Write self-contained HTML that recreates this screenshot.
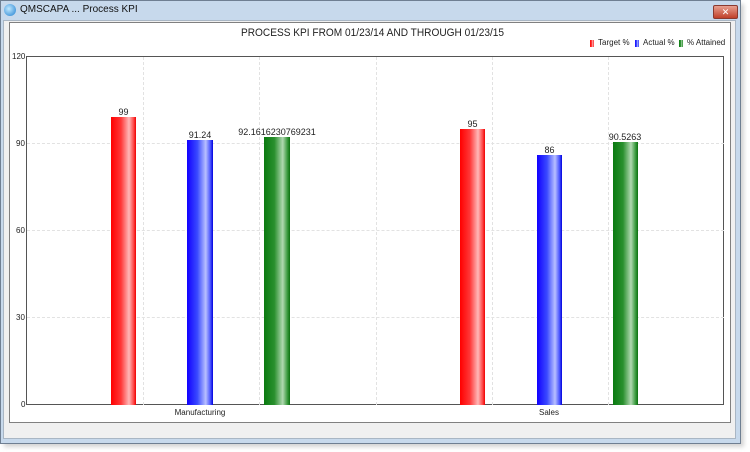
<!DOCTYPE html>
<html><head><style>
body{margin:0;width:750px;height:452px;background:#fff;position:relative;overflow:hidden;font-family:"Liberation Sans",sans-serif}
.a{position:absolute}
.t{position:absolute;font-size:9px;color:#222;white-space:nowrap}
.r{background:linear-gradient(90deg,#f00 0%,#ff3838 40%,#ffb8b8 72%,#ff4a4a 90%,#e00 100%)}
.b{background:linear-gradient(90deg,#10f 0%,#3a4aff 40%,#b8bfff 72%,#4a55ff 90%,#00d 100%)}
.g{background:linear-gradient(90deg,#0a7a10 0%,#2a902e 40%,#b0d8b0 72%,#3a9a3e 90%,#0a700e 100%)}
.vg{position:absolute;top:57px;height:348px;border-left:1px dashed #e2e2e2}
.hg{position:absolute;left:27px;width:697px;border-top:1px dashed #e2e2e2}
</style></head><body>
<div class="a" style="left:4px;top:4px;width:740px;height:443px;background:#aaa;opacity:.5;filter:blur(2px)"></div>
<div class="a" style="left:0;top:0;width:739px;height:442px;background:#c7d9ec;border:1px solid #6f7f92"></div>
<div class="a" style="left:3px;top:20px;width:733px;height:419px;background:#f0f0f0;border:1px solid #a9b6c4;box-sizing:border-box"></div>
<div class="a" style="left:4px;top:4px;width:12px;height:12px;border-radius:50%;background:radial-gradient(circle at 40% 40%,#bfe8ff,#1f7fd0)"></div>
<div class="t" style="left:20px;top:4px;font-size:10px;color:#111">QMSCAPA ... Process KPI</div>
<div class="a" style="left:713px;top:5px;width:23px;height:12px;border-radius:2px;background:linear-gradient(#e8a090,#c0402a);border:1px solid #8a3a30;color:#fff;font-size:9px;text-align:center;line-height:12px">✕</div>
<div class="a" style="left:9px;top:22px;width:722px;height:401px;background:#fff;border:1px solid #808080;box-sizing:border-box"></div>
<div class="t" style="left:241px;top:27px;font-size:11px;color:#222;transform:scaleX(0.92);transform-origin:left">PROCESS KPI FROM 01/23/14 AND THROUGH 01/23/15</div>
<div class="a r" style="left:590px;top:40px;width:4px;height:7px"></div><div class="t" style="left:598px;top:38px;font-size:8px">Target %</div>
<div class="a b" style="left:635px;top:40px;width:4px;height:7px"></div><div class="t" style="left:643px;top:38px;font-size:8px">Actual %</div>
<div class="a g" style="left:679px;top:40px;width:4px;height:7px"></div><div class="t" style="left:687px;top:38px;font-size:8px">% Attained</div>
<div class="a" style="left:26px;top:56px;width:698px;height:349px;border:1px solid #555;box-sizing:border-box"></div>
<div class="vg" style="left:143px"></div><div class="vg" style="left:259px"></div><div class="vg" style="left:376px"></div><div class="vg" style="left:492px"></div><div class="vg" style="left:608px"></div>
<div class="hg" style="top:143px"></div><div class="hg" style="top:230px"></div><div class="hg" style="top:317px"></div>
<div class="t" style="left:12px;top:52px;font-size:8px">120</div>
<div class="t" style="left:16px;top:139px;font-size:8px">90</div>
<div class="t" style="left:16px;top:226px;font-size:8px">60</div>
<div class="t" style="left:16px;top:313px;font-size:8px">30</div>
<div class="t" style="left:21px;top:400px;font-size:8px">0</div>
<div class="a r" style="left:111px;top:117px;width:25px;height:288px"></div>
<div class="a b" style="left:187px;top:140px;width:26px;height:265px"></div>
<div class="a g" style="left:264px;top:137px;width:26px;height:268px"></div>
<div class="a r" style="left:460px;top:129px;width:25px;height:276px"></div>
<div class="a b" style="left:537px;top:155px;width:25px;height:250px"></div>
<div class="a g" style="left:613px;top:142px;width:25px;height:263px"></div>
<div class="t" style="left:111px;width:25px;text-align:center;top:107px">99</div>
<div class="t" style="left:170px;width:60px;text-align:center;top:130px">91.24</div>
<div class="t" style="left:227px;width:100px;text-align:center;top:127px">92.1616230769231</div>
<div class="t" style="left:460px;width:25px;text-align:center;top:119px">95</div>
<div class="t" style="left:537px;width:25px;text-align:center;top:145px">86</div>
<div class="t" style="left:595px;width:60px;text-align:center;top:132px">90.5263</div>
<div class="t" style="left:150px;width:100px;text-align:center;top:408px;font-size:8px">Manufacturing</div>
<div class="t" style="left:499px;width:100px;text-align:center;top:408px;font-size:8px">Sales</div>
</body></html>
